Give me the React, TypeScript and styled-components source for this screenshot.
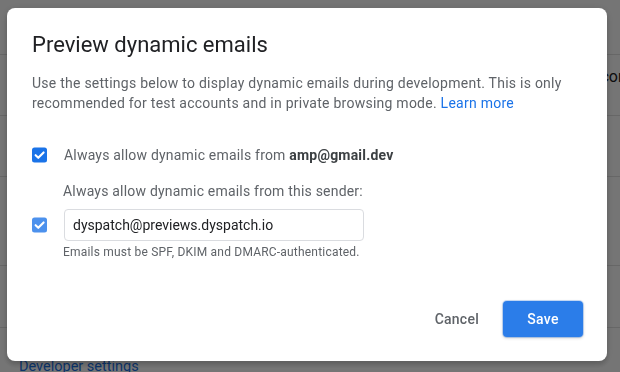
import React from "react";
import styled, {createGlobalStyle} from "styled-components";

const GlobalStyle = createGlobalStyle`
	html, body {
		margin: 0;
		padding: 0;
		width: 620px;
		height: 372px;
		overflow: hidden;
		font-family: Roboto, "Liberation Sans", Arial, sans-serif;
		-webkit-font-smoothing: antialiased;
	}
`;

const Page = styled.div`
	width: 620px;
	height: 372px;
	background: #fff;
	display: flex;
	flex-direction: column;
	overflow: hidden;
`;

const PageRow = styled.div<{$h: number}>`
	height: ${p => p.$h}px;
	flex: none;
	border-bottom: 1px solid #e0e0e0;
	display: flex;
	justify-content: flex-end;
	padding-top: 12px;
	box-sizing: border-box;
	font-size: 16px;
	color: #202124;
`;

const Clipped = styled.span`
	margin-right: -12px;
`;

const PageFooter = styled.div`
	flex: 1;
	display: flex;
	align-items: flex-end;
	padding-left: 19px;
`;

const DevLink = styled.a`
	font-size: 14.5px;
	color: #1a73e8;
	line-height: 20px;
	margin-bottom: -5px;
`;

const Overlay = styled.div`
	position: fixed;
	inset: 0;
	background: rgba(0, 0, 0, 0.54);
	display: flex;
	align-items: flex-start;
	padding: 8px 0 0 7px;
`;

const Dialog = styled.div`
	width: 600px;
	height: 353px;
	box-sizing: border-box;
	background: #fff;
	border-radius: 8px;
	box-shadow: 0 4px 5px rgba(0,0,0,0.14), 0 1px 10px rgba(0,0,0,0.12);
	padding: 23px 24px 24px 25px;
	display: flex;
	flex-direction: column;
`;

const Title = styled.h2`
	margin: 0;
	font-size: 22px;
	line-height: 28px;
	font-weight: 400;
	color: #202124;
`;

const Description = styled.p`
	margin: 14px 0 0;
	font-size: 14px;
	line-height: 20px;
	color: #5f6368;
	letter-spacing: 0.25px;
`;

const Link = styled.a`
	color: #1a73e8;
	text-decoration: none;
`;

const OptionRow = styled.div<{$top: number}>`
	display: flex;
	align-items: center;
	gap: 16px;
	margin-top: ${p => p.$top}px;
	font-size: 14px;
	line-height: 20px;
	color: #5f6368;
	letter-spacing: 0.2px;
`;

const Bold = styled.b`
	color: #3c4043;
	font-weight: 700;
`;

const Label = styled.div`
	margin: 16px 0 0 31px;
	font-size: 14px;
	line-height: 20px;
	color: #5f6368;
	letter-spacing: 0.2px;
`;

const SenderRow = styled.div`
	display: flex;
	align-items: center;
	gap: 16px;
	margin-top: 8px;
`;

const Input = styled.input`
	width: 300px;
	height: 32px;
	box-sizing: border-box;
	border: 1px solid #dadce0;
	border-radius: 4px;
	padding: 0 8px;
	font-family: inherit;
	font-size: 14px;
	color: #202124;
	outline: none;
`;

const Helper = styled.div`
	margin: 3px 0 0 31px;
	font-size: 12px;
	line-height: 16px;
	color: #5f6368;
	letter-spacing: 0.2px;
`;

const Actions = styled.div`
	margin-top: auto;
	display: flex;
	justify-content: flex-end;
	align-items: center;
	gap: 8px;
`;

const Button = styled.button<{$primary?: boolean}>`
	height: 36px;
	border: none;
	border-radius: 4px;
	font-family: inherit;
	font-size: 14px;
	font-weight: 500;
	letter-spacing: 0.25px;
	padding: 0 ${p => (p.$primary ? 24 : 16)}px;
	min-width: ${p => (p.$primary ? 80 : 0)}px;
	background: ${p => (p.$primary ? "#2b7de9" : "transparent")};
	color: ${p => (p.$primary ? "#fff" : "#5f6368")};
	box-shadow: ${p => (p.$primary ? "0 0 0 1px rgba(43,125,233,0.25), 0 1px 3px rgba(60,64,67,0.3)" : "none")};
	cursor: pointer;
`;

const Box = styled.svg<{$faded?: boolean}>`
	flex: none;
	opacity: ${p => (p.$faded ? 0.78 : 1)};
`;

function Checkbox({faded}: {faded?: boolean}) {
	return (
		<Box $faded={faded} width="16" height="16" viewBox="0 0 16 16">
			<rect x="0" y="0.5" width="15" height="15" rx="2.5" fill="#1a73e8"/>
			<path d="M3.6 8.2l2.7 2.6L11.6 5.4" fill="none" stroke="#fff" strokeWidth="2.1" strokeLinecap="round" strokeLinejoin="round"/>
		</Box>
	);
}

export default function App() {
	return (
		<>
			<GlobalStyle/>
			<Page>
				<PageRow $h={55}/>
				<PageRow $h={61}><Clipped>com</Clipped></PageRow>
				<PageRow $h={61}/>
				<PageRow $h={89}/>
				<PageRow $h={62}/>
				<PageFooter><DevLink>Developer settings</DevLink></PageFooter>
			</Page>
			<Overlay>
				<Dialog>
					<Title>Preview dynamic emails</Title>
					<Description>
						Use the settings below to display dynamic emails during development. This is only
						recommended for test accounts and in private browsing mode. <Link>Learn more</Link>
					</Description>
					<OptionRow $top={32}>
						<Checkbox/>
						<span>Always allow dynamic emails from <Bold>amp@gmail.dev</Bold></span>
					</OptionRow>
					<Label>Always allow dynamic emails from this sender:</Label>
					<SenderRow>
						<Checkbox faded/>
						<Input defaultValue="dyspatch@previews.dyspatch.io"/>
					</SenderRow>
					<Helper>Emails must be SPF, DKIM and DMARC-authenticated.</Helper>
					<Actions>
						<Button>Cancel</Button>
						<Button $primary>Save</Button>
					</Actions>
				</Dialog>
			</Overlay>
		</>
	);
}
